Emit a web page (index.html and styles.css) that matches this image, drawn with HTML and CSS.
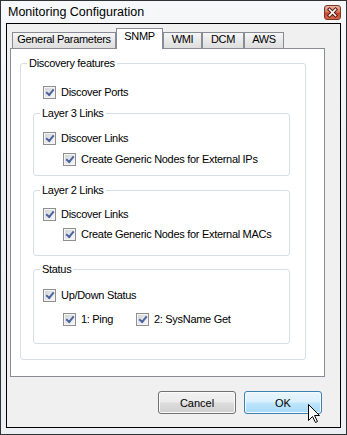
FILE: index.html
```html
<!DOCTYPE html>
<html lang="en">
<head>
  <meta charset="UTF-8" />
  <title>Monitoring Configuration</title>
  <link rel="stylesheet" href="styles.css">
</head>
<body>

  <div class="window">
    <div class="titlebar">
      <span class="title">Monitoring Configuration</span>
      <span class="close">
        <svg width="15" height="13" viewBox="0 0 15 13">
          <path d="M4.5 3.5 L10.5 9.5 M10.5 3.5 L4.5 9.5" stroke="#5a1f14" stroke-width="3.6" stroke-linecap="square" />
          <path d="M4.5 3.5 L10.5 9.5 M10.5 3.5 L4.5 9.5" stroke="#fff" stroke-width="1.6" stroke-linecap="square" />
        </svg>
      </span>
    </div>

    <div class="client">
      <div class="tabs">
        <div class="tab tab-general">General Parameters</div>
        <div class="tab tab-snmp active">SNMP</div>
        <div class="tab tab-wmi">WMI</div>
        <div class="tab tab-dcm">DCM</div>
        <div class="tab tab-aws">AWS</div>
      </div>

      <div class="panel">
        <div class="group outer">
          <div class="group-title">Discovery features</div>
          <div class="check-row"><span class="check"></span>Discover Ports</div>

          <div class="group layer3">
            <div class="group-title">Layer 3 Links</div>
            <div class="check-row"><span class="check"></span>Discover Links</div>
            <div class="check-row sub"><span class="check"></span>Create Generic Nodes for External IPs</div>
          </div>

          <div class="group layer2">
            <div class="group-title">Layer 2 Links</div>
            <div class="check-row"><span class="check"></span>Discover Links</div>
            <div class="check-row sub"><span class="check"></span>Create Generic Nodes for External MACs</div>
          </div>

          <div class="group status">
            <div class="group-title">Status</div>
            <div class="check-row"><span class="check"></span>Up/Down Status</div>
            <div class="check-row sub">
              <span class="check-item ping"><span class="check"></span>1: Ping</span>
              <span class="check-item"><span class="check"></span>2: SysName Get</span>
            </div>
          </div>
        </div>
      </div>

      <div class="buttons">
        <button class="btn">Cancel</button>
        <button class="btn btn-hot">OK</button>
      </div>
    </div>

    <!-- mouse pointer resting on OK -->
    <svg class="cursor" width="13" height="20" viewBox="0 0 13 20">
      <path d="M0.5 0.5 L0.5 16.5 L4.5 12.5 L7.5 18.5 L9.5 17.5 L6.5 11.5 L11.5 11.5 Z" fill="#fff" stroke="#000" stroke-width="1" stroke-linejoin="miter" />
    </svg>
  </div>

</body>
</html>
```

FILE: styles.css
```css
body {
  margin: 0;
  font-family: "Liberation Sans", Arial, sans-serif;
  font-size: 11px;
  color: #000;
  background: #fff;
}

.window {
  position: relative;
  width: 347px;
  height: 435px;
  box-sizing: border-box;
  border: 1px solid #2f3235;
  padding: 0 5px 6px 5px;
  background: linear-gradient(#f7f8fa, #eef1f4 30%, #eceff3);
  display: flex;
  flex-direction: column;
}

.titlebar {
  height: 22px;
  flex: none;
  display: flex;
  align-items: flex-start;
  justify-content: space-between;
}

.title {
  margin: 4px 0 0 2px;
  font-size: 12.5px;
  line-height: 15px;
}

.close {
  width: 17px;
  height: 15px;
  margin-top: 4px;
  box-sizing: border-box;
  border: 1px solid #7a3626;
  border-radius: 3px;
  background: linear-gradient(#ecb4a3, #db7a61 45%, #c9472b 55%, #d8674c);
  display: flex;
  align-items: center;
  justify-content: center;
}

.close svg {
  display: block;
}

.client {
  flex: 1;
  border: 1px solid #000;
  background: #f0f0f0;
  display: flex;
  flex-direction: column;
}

/* tab strip */
.tabs {
  display: flex;
  align-items: flex-end;
  padding: 4px 0 0 5px;
}

.tab {
  box-sizing: border-box;
  height: 16px;
  border: 1px solid #898c95;
  border-bottom: none;
  background: linear-gradient(#f6f6f6, #e9e9e9 50%, #dedede);
  line-height: 13px;
  text-align: center;
  letter-spacing: -0.3px;
}

.tab.active {
  position: relative;
  z-index: 1;
  height: 21px;
  margin-bottom: -1px;
  padding-top: 1px;
  background: #fff;
}

.tab-general { width: 104px; }
.tab-snmp { width: 47px; }
.tab-wmi { width: 39px; }
.tab-dcm { width: 42px; }
.tab-aws { width: 40px; }

.panel {
  margin: 0 15px 0 3px;
  border: 1px solid #898c95;
  background: #fff;
  padding: 14px 18px 16px 9px;
}

/* group boxes */
.group {
  border: 1px solid #d5dfe5;
  border-radius: 3px;
}

.group-title {
  width: fit-content;
  margin: -7px 0 0 6px;
  padding: 0 2px;
  background: #fff;
  line-height: 13px;
  letter-spacing: -0.3px;
}

.outer {
  padding-bottom: 15px;
}

.outer > .check-row {
  margin: 16px 0 0 22px;
}

.outer > .group {
  margin: 14px 15px 0 12px;
}

.group .group .check-row {
  margin-left: 9px;
}

.group .group .check-row.sub {
  margin-left: 29px;
}

.layer3 { padding-bottom: 9px; }
.layer3 .check-row { margin-top: 12px; }
.layer3 .check-row.sub { margin-top: 8px; }

.layer2 { padding-bottom: 14px; }
.layer2 .check-row { margin-top: 11px; }
.layer2 .check-row.sub { margin-top: 7px; }

.outer > .status { margin-top: 13px; }
.status { padding-bottom: 17px; }
.status .check-row { margin-top: 13px; }
.status .check-row.sub { margin-top: 11px; }

/* checkboxes */
.check-row,
.check-item {
  display: flex;
  align-items: center;
  gap: 5px;
  height: 13px;
  line-height: 13px;
  letter-spacing: -0.3px;
  white-space: nowrap;
}

.check-row {
  gap: 0;
}

.check-row > .check {
  margin-right: 5px;
}

.check-item.ping {
  width: 73px;
}

.check {
  flex: none;
  width: 13px;
  height: 13px;
  box-sizing: border-box;
  border: 1px solid #8e8f8f;
  box-shadow: inset 0 0 0 1px #f4f4f4;
  background: linear-gradient(135deg, #cfd0d2, #eeeeee 70%, #f7f7f7);
  display: flex;
  align-items: center;
  justify-content: center;
}

.check::after {
  content: "";
  width: 6px;
  height: 3px;
  margin-top: -2px;
  border-left: 2px solid #4a62a0;
  border-bottom: 2px solid #4a62a0;
  transform: rotate(-50deg);
}

/* dialog buttons */
.buttons {
  display: flex;
  justify-content: flex-end;
  gap: 8px;
  margin: 14px 18px 0 0;
}

.btn {
  width: 78px;
  height: 23px;
  padding: 0;
  font-family: "Liberation Sans", Arial, sans-serif;
  font-size: 11px;
  color: #000;
  border: 1px solid #707070;
  border-radius: 3px;
  background: linear-gradient(#f2f2f2, #ebebeb 48%, #dddddd 52%, #cfcfcf);
  box-shadow: inset 0 0 0 1px #fbfbfb;
}

.btn-hot {
  border-color: #3c7fb1;
  background: linear-gradient(#eaf6fd, #d9f0fc 48%, #bee6fd 52%, #a7d9f5);
  box-shadow: inset 0 0 0 1px #f4fbfe;
}

.cursor {
  position: absolute;
  left: 307px;
  top: 403px;
}
```
